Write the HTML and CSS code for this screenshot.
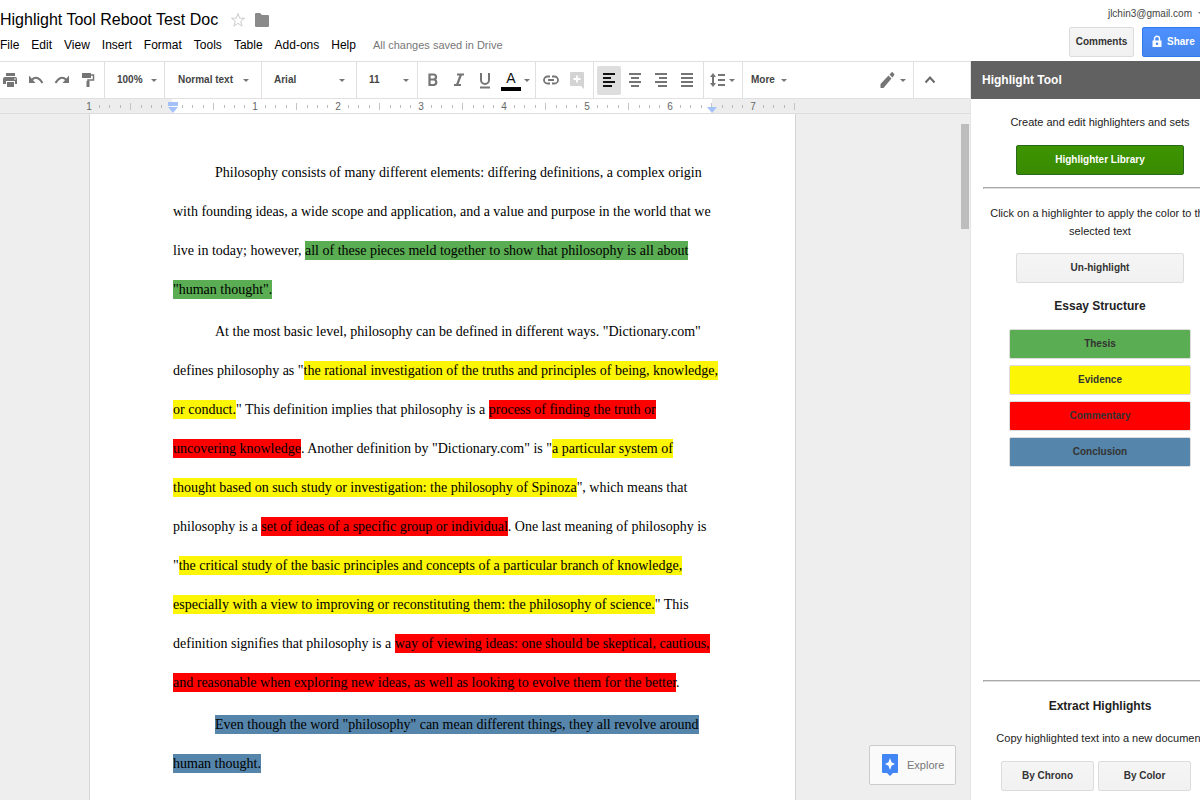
FILE: index.html
```html
<!DOCTYPE html>
<html lang="en">
<head>
<meta charset="utf-8">
<title>Highlight Tool Reboot Test Doc</title>
<link rel="stylesheet" href="styles.css">
</head>
<body>
<div class="app">
  <header class="header">
    <div class="header-main">
      <div class="title-row">
        <h1 class="title">Highlight Tool Reboot Test Doc</h1>
        <button class="icon-btn star" aria-label="Star"><svg width="16" height="16" viewBox="0 0 16 16"><path d="M8 1.500l1.700 4.700 4.800.1-3.800 3 1.400 4.900L8 11.300l-4.100 2.900 1.400-4.900-3.800-3 4.800-.1z" fill="none" stroke="#ccc"/></svg></button>
        <button class="icon-btn" aria-label="Move to folder"><svg width="16" height="16" viewBox="0 0 16 16"><path d="M1 2Q1 1 2 1H6L8 3H14Q15 3 15 4V14Q15 15 14 15H2Q1 15 1 14Z" fill="#8a8a8a"/></svg></button>
      </div>
      <nav class="menu">
        <button>File</button><button>Edit</button><button>View</button><button>Insert</button><button>Format</button><button>Tools</button><button>Table</button><button>Add-ons</button><button>Help</button>
        <span class="saved">All changes saved in Drive</span>
      </nav>
    </div>
    <div class="account">
      <button class="email">jlchin3@gmail.com <span class="caret"></span></button>
      <div class="account-actions">
        <button class="btn comments">Comments</button>
        <button class="btn share"><svg width="10" height="14" viewBox="0 0 10 14"><path d="M2.500 6V3.800a2.500 2.500 0 0 1 5 0V6" fill="none" stroke="#fff" stroke-width="1.400"/><path d="M.5 5.500h9V12h-9z" fill="#fff"/><circle cx="5" cy="8.800" r="1.300" fill="#4a86f0"/></svg>Share</button>
      </div>
    </div>
  </header>

  <div class="workspace">
    <main class="editor">
      <div class="toolbar" role="toolbar" aria-label="Formatting">
        <div class="group g-history">
          <button class="icon-btn" aria-label="Print"><svg width="16" height="16" viewBox="0 0 16 16" fill="#757575"><path d="M4 1h9v3H4zM3 5h10.500Q15 5 15 7V12H13V9H4V12H1V7Q1 5 3 5zM5 10h7v5H5z"/><circle cx="13" cy="7" r=".8" fill="#fff"/></svg></button>
          <button class="icon-btn" aria-label="Undo"><svg width="16" height="16" viewBox="0 0 16 16"><path d="M3.500 8Q9.500 2.500 14.500 11" fill="none" stroke="#757575" stroke-width="2"/><path d="M1 3.500V11H7.500z" fill="#757575"/></svg></button>
          <button class="icon-btn" aria-label="Redo"><svg width="16" height="16" viewBox="0 0 16 16"><path d="M12.500 8Q6.500 2.500 1.500 11" fill="none" stroke="#757575" stroke-width="2"/><path d="M15 3.500V11H8.500z" fill="#757575"/></svg></button>
          <button class="icon-btn" aria-label="Paint format"><svg width="16" height="16" viewBox="0 0 16 16"><path d="M2 1h9v5H2z" fill="#757575"/><path d="M11 3h2.500v5H8v2" fill="none" stroke="#757575" stroke-width="1.500"/><path d="M6.500 9h3v6h-3z" fill="#757575"/></svg></button>
        </div>
        <label class="group g-zoom"><select class="pick" aria-label="Zoom"><option>100%</option></select><span class="caret"></span></label>
        <label class="group g-style"><select class="pick" aria-label="Style"><option>Normal text</option></select><span class="caret"></span></label>
        <label class="group g-font"><select class="pick" aria-label="Font"><option>Arial</option></select><span class="caret"></span></label>
        <label class="group g-size"><select class="pick" aria-label="Font size"><option>11</option></select><span class="caret"></span></label>
        <div class="group g-format">
          <button class="icon-btn" aria-label="Bold"><svg width="16" height="16" viewBox="0 0 16 16"><path d="M4.500 2.500H8.500A2.500 2.500 0 0 1 8.500 7.500H4.500zM4.500 7.500H9A2.800 2.800 0 0 1 9 13H4.500z" fill="none" stroke="#757575" stroke-width="2.200"/></svg></button>
          <button class="icon-btn" aria-label="Italic"><svg width="16" height="16" viewBox="0 0 16 16"><path d="M6 2.500h7M3 13h7M10 2.500L6 13" fill="none" stroke="#757575" stroke-width="2.200"/></svg></button>
          <button class="icon-btn" aria-label="Underline"><svg width="16" height="18" viewBox="0 0 16 18"><path d="M4 2v7a4 4 0 0 0 8 0V2M3 16.500h10" fill="none" stroke="#757575" stroke-width="2"/></svg></button>
          <button class="color-btn" aria-label="Text color">A</button><span class="caret"></span>
        </div>
        <div class="group g-insert">
          <button class="icon-btn" aria-label="Insert link"><svg width="16" height="16" viewBox="0 0 16 16"><path d="M7 4.500H4.500a3.500 3.500 0 0 0 0 7H7M9 4.500h2.500a3.500 3.500 0 0 1 0 7H9M5 8h6" fill="none" stroke="#757575" stroke-width="1.800"/></svg></button>
          <button class="icon-btn" aria-label="Add comment"><svg width="16" height="18" viewBox="0 0 16 18"><path d="M2 1h12q1 0 1 1v16l-3-3H2q-1 0-1-1V2q0-1 1-1z" fill="#d4d4d4"/><path d="M8 4.500v7M4.500 8h7" stroke="#fff" stroke-width="1.800"/></svg></button>
        </div>
        <div class="group g-align">
          <button class="icon-btn active" aria-label="Align left"><svg width="14" height="16" viewBox="0 0 14 16"><path d="M1 2h12M1 6h8M1 10h12M1 14h9" stroke="#111" stroke-width="2"/></svg></button>
          <button class="icon-btn" aria-label="Align center"><svg width="14" height="16" viewBox="0 0 14 16"><path d="M1 2h12M3 6h8M1 10h12M3 14h8" stroke="#757575" stroke-width="2"/></svg></button>
          <button class="icon-btn" aria-label="Align right"><svg width="14" height="16" viewBox="0 0 14 16"><path d="M1 2h12M5 6h8M1 10h12M4 14h9" stroke="#757575" stroke-width="2"/></svg></button>
          <button class="icon-btn" aria-label="Justify"><svg width="14" height="16" viewBox="0 0 14 16"><path d="M1 2h12M1 6h12M1 10h12M1 14h12" stroke="#757575" stroke-width="2"/></svg></button>
        </div>
        <div class="group g-spacing">
          <button class="icon-btn" aria-label="Line spacing"><svg width="16" height="16" viewBox="0 0 16 16"><path d="M3 3v10M8 3h7M8 8h7M8 13h7" stroke="#757575" stroke-width="2"/><path d="M0 5l3-4 3 4zM0 11l3 4 3-4z" fill="#757575"/></svg></button><span class="caret"></span>
        </div>
        <button class="more">More <span class="caret"></span></button>
        <div class="group g-mode">
          <button class="icon-btn" aria-label="Editing mode"><svg width="16" height="18" viewBox="0 0 16 18"><path d="M1.500 17v-4L9.500 4.500l3 3L4.500 17zM10.500 3.500l1.800-2q.8-.8 1.600 0L15 2.800q.7.800 0 1.600l-1.700 2z" fill="#757575"/></svg></button><span class="caret"></span>
        </div>
        <div class="g-hide">
          <button class="icon-btn" aria-label="Hide the menus"><svg width="12" height="10" viewBox="0 0 12 10"><path d="M1.500 7.500L6 2.500l4.500 5" fill="none" stroke="#686868" stroke-width="2"/></svg></button>
        </div>
      </div>

      <svg class="ruler" width="970" height="15" viewBox="0 0 970 15">
        <defs><pattern id="inch" x="89" y="0" width="83" height="15" patternUnits="userSpaceOnUse"><path d="M10.500 6v3M20.500 6v3M31.500 6v3M52.500 6v3M62.500 6v3M72.500 6v3" stroke="#bbb"/><path d="M41.500 4v7" stroke="#c4c4c4"/></pattern></defs>
        <path d="M172 0h540v14H172z" fill="#fff"/>
        <path d="M89 0h707v14H89z" fill="url(#inch)"/>
        <path d="M0 14.500h970" stroke="#ddd"/>
        <g class="ruler-labels"><text x="89" y="11">1</text><text x="255" y="11">1</text><text x="338" y="11">2</text><text x="421" y="11">3</text><text x="504" y="11">4</text><text x="587" y="11">5</text><text x="670" y="11">6</text><text x="753" y="11">7</text></g>
        <path d="M168 3h10v4h-10zM168 8h10l-5 6zM707 8h10l-5 6z" fill="#a4c2f9"/>
      </svg>

      <div class="canvas">
        <article class="page">
          <p>Philosophy consists of many different elements: differing definitions, a complex origin<br>with founding ideas, a wide scope and application, and a value and purpose in the world that we<br>live in today; however, <mark class="thesis">all of these pieces meld together to show that philosophy is all about<br>"human thought".</mark></p>
          <p>At the most basic level, philosophy can be defined in different ways. "Dictionary.com"<br>defines philosophy as "<mark class="evidence">the rational investigation of the truths and principles of being, knowledge,<br>or conduct.</mark>" This definition implies that philosophy is a <mark class="commentary">process of finding the truth or<br>uncovering knowledge</mark>. Another definition by "Dictionary.com" is "<mark class="evidence">a particular system of<br>thought based on such study or investigation: the philosophy of Spinoza</mark>", which means that<br>philosophy is a <mark class="commentary">set of ideas of a specific group or individual</mark>. One last meaning of philosophy is<br>"<mark class="evidence">the critical study of the basic principles and concepts of a particular branch of knowledge,<br>especially with a view to improving or reconstituting them: the philosophy of science.</mark>" This<br>definition signifies that philosophy is a <mark class="commentary">way of viewing ideas: one should be skeptical, cautious,<br>and reasonable when exploring new ideas, as well as looking to evolve them for the better</mark>.</p>
          <p><mark class="conclusion">Even though the word "philosophy" can mean different things, they all revolve around<br>human thought.</mark></p>
        </article>
        <div class="scrollbar"></div>
        <button class="explore"><svg width="16" height="22" viewBox="0 0 16 22"><path d="M1 0h14q1 0 1 1v17q0 1-1 1h-4l-3 3-3-3H1q-1 0-1-1V1q0-1 1-1z" fill="#4285f4"/><path d="M8 4l1.500 4.200L13 10l-3.500 1.800L8 16l-1.500-4.200L3 10l3.500-1.800z" fill="#fff"/></svg>Explore</button>
      </div>
    </main>

    <aside class="sidebar">
      <h2 class="sidebar-title">Highlight Tool</h2>
      <div class="sidebar-body">
        <p class="note">Create and edit highlighters and sets</p>
        <button class="btn wide library">Highlighter Library</button>
        <hr class="rule">
        <p class="note">Click on a highlighter to apply the color to the selected text</p>
        <button class="btn wide unhighlight">Un-highlight</button>
        <h3 class="subhead">Essay Structure</h3>
        <div class="colors">
          <button class="btn thesis">Thesis</button>
          <button class="btn evidence">Evidence</button>
          <button class="btn commentary">Commentary</button>
          <button class="btn conclusion">Conclusion</button>
        </div>
        <section class="extract">
          <hr class="rule">
          <h3 class="subhead">Extract Highlights</h3>
          <p class="note">Copy highlighted text into a new document</p>
          <div class="extract-actions">
            <button class="btn">By Chrono</button>
            <button class="btn">By Color</button>
          </div>
        </section>
      </div>
    </aside>
  </div>
</div>
</body>
</html>
```
FILE: styles.css
```css
* { box-sizing: border-box; }
body {
  margin: 0;
  overflow: hidden;
  background: #fff;
  color: #222;
  font: 12px/18px "Liberation Sans", Arial, sans-serif;
}
button, select { font: inherit; color: inherit; border: 0; background: none; padding: 0; margin: 0; }
h1, h2, h3, p { margin: 0; }
svg { display: block; flex: none; }
.app { display: flex; flex-direction: column; height: 100vh; overflow: hidden; }

.header { display: flex; justify-content: space-between; flex: 0 0 61px; }
.title-row { display: flex; align-items: center; height: 36px; padding-top: 4px; }
.title { font-size: 16px; line-height: 24px; font-weight: 400; color: #000; margin-right: 12px; white-space: nowrap; }
.star { margin-right: 8px; }
.menu { display: flex; align-items: center; gap: 12px; color: #000; white-space: nowrap; }
.saved { color: #777; font-size: 11px; margin-left: 5px; }
.account { display: flex; flex-direction: column; align-items: flex-end; gap: 5px; margin-right: -10px; padding-top: 5px; }
.email { display: flex; align-items: center; gap: 6px; font-size: 10px; line-height: 17px; color: #444; margin-right: 6px; }
.account-actions { display: flex; gap: 8px; }
.btn {
  height: 30px;
  border: 1px solid #dcdcdc;
  border-radius: 2px;
  background: linear-gradient(#f5f5f5, #f1f1f1);
  font-size: 10px;
  font-weight: 700;
  color: #333;
  text-align: center;
}
.comments { width: 65px; }
.share { display: flex; align-items: center; gap: 5px; width: 68px; padding-left: 9px; color: #fff; border-color: #3079ed; background: linear-gradient(#4d90fe, #4787ed); }
.caret { flex: none; width: 0; height: 0; border: 3px solid transparent; border-top-color: #777; border-bottom: 0; }
.icon-btn { display: flex; align-items: center; justify-content: center; flex: none; }

.workspace { display: flex; flex: 1; min-height: 0; }
.editor { display: flex; flex-direction: column; flex: 1; min-width: 0; }
.toolbar { display: flex; flex: 0 0 38px; border-top: 1px solid #e0e0e0; border-bottom: 1px solid #e0e0e0; color: #444; font-size: 10px; font-weight: 700; }
.group { display: flex; align-items: center; border-right: 1px solid #e0e0e0; flex: none; }
.pick { appearance: none; flex: 1; min-width: 0; outline: 0; }
.g-history { width: 105px; gap: 10px; padding-left: 2px; }
.g-zoom { width: 60px; padding: 0 7px 0 12px; }
.g-style { width: 97px; padding: 0 12px 0 13px; }
.g-font { width: 95px; padding: 0 11px 0 12px; }
.g-size { width: 61px; padding: 0 8px 0 12px; }
.g-format { width: 118px; gap: 10px; padding-left: 7px; }
.g-format .color-btn { margin-left: -2px; }
.g-format .caret { margin-left: -7px; }
.g-insert { width: 58px; gap: 10px; padding-left: 7px; }
.g-align { width: 110px; gap: 2px; padding-left: 3px; }
.g-align .icon-btn { width: 24px; height: 29px; border-radius: 2px; }
.active { background: #dedede; }
.g-spacing { width: 39px; gap: 3px; padding-left: 6px; }
.color-btn { width: 20px; height: 22px; font-size: 14px; line-height: 18px; font-weight: 400; color: #111; border-bottom: 4px solid #000; }
.more { display: flex; align-items: center; gap: 6px; padding-left: 8px; }
.g-mode { gap: 5px; padding-right: 7px; margin-left: auto; }
.g-hide { display: flex; justify-content: center; width: 32px; margin-right: 24px; }
.ruler { background: #ededed; }
.ruler-labels { font-size: 10px; fill: #666; text-anchor: middle; }

.canvas { position: relative; flex: 1; min-height: 0; overflow: hidden; display: flex; background: #eee; padding-left: 89px; }
.page {
  width: 707px;
  padding: 39px 80px 0 83px;
  background: #fff;
  border: solid #d5d5d5;
  border-width: 0 1px;
  color: #000;
  font: 14px/39px "Liberation Serif", "Times New Roman", serif;
  white-space: nowrap;
}
.page p { text-indent: 42px; margin-bottom: 3px; }
mark { color: inherit; padding: 2px 0; }
.thesis { background: #5aad52; }
.evidence { background: #fdf506; }
.commentary { background: #f00; }
.conclusion { background: #5585aa; }
.scrollbar { width: 8px; height: 105px; margin: 10px 1px 0 auto; background: #bdbdbd; }
.explore {
  position: absolute;
  right: 14px;
  bottom: 15px;
  display: flex;
  align-items: center;
  gap: 9px;
  width: 87px;
  height: 40px;
  padding-left: 12px;
  border: 1px solid #ccc;
  border-radius: 2px;
  background: #fafafa;
  color: #777;
  font-size: 11px;
}

.sidebar { display: flex; flex-direction: column; flex: 0 0 260px; margin-right: -30px; border-left: 1px solid #e5e5e5; }
.sidebar-title { flex: 0 0 38px; padding-left: 11px; background: #616161; color: #fff; font-size: 12px; line-height: 38px; }
.sidebar-body { display: flex; flex-direction: column; align-items: center; flex: 1; padding: 14px 13px 9px 12px; text-align: center; }
.note { margin: 0 -12px; font-size: 11px; }
.wide { width: 168px; }
.library { margin-top: 14px; border-color: #29691d; background: linear-gradient(#3d9400, #398a00); color: #fff; }
.rule { width: 100%; margin: 12px 0 15px; border: 1px solid #aaa; border-right: 0; border-bottom-color: #ddd; }
.unhighlight { margin-top: 13px; }
.subhead { font-size: 12px; line-height: 18px; }
.unhighlight + .subhead { margin-top: 14px; }
.colors { display: flex; flex-direction: column; gap: 6px; width: 182px; margin-top: 14px; }
.colors .btn { height: 30px; }
.colors .thesis { background: #5aad52; }
.colors .evidence { background: #fdf506; }
.colors .commentary { background: #f00; }
.colors .conclusion { background: #5585aa; }
.extract { width: 100%; margin-top: auto; }
.extract .note { margin-top: 14px; }
.extract-actions { display: grid; grid-template-columns: 93px 93px; justify-content: center; gap: 4px; margin: 14px 8px 0 0; }
```
